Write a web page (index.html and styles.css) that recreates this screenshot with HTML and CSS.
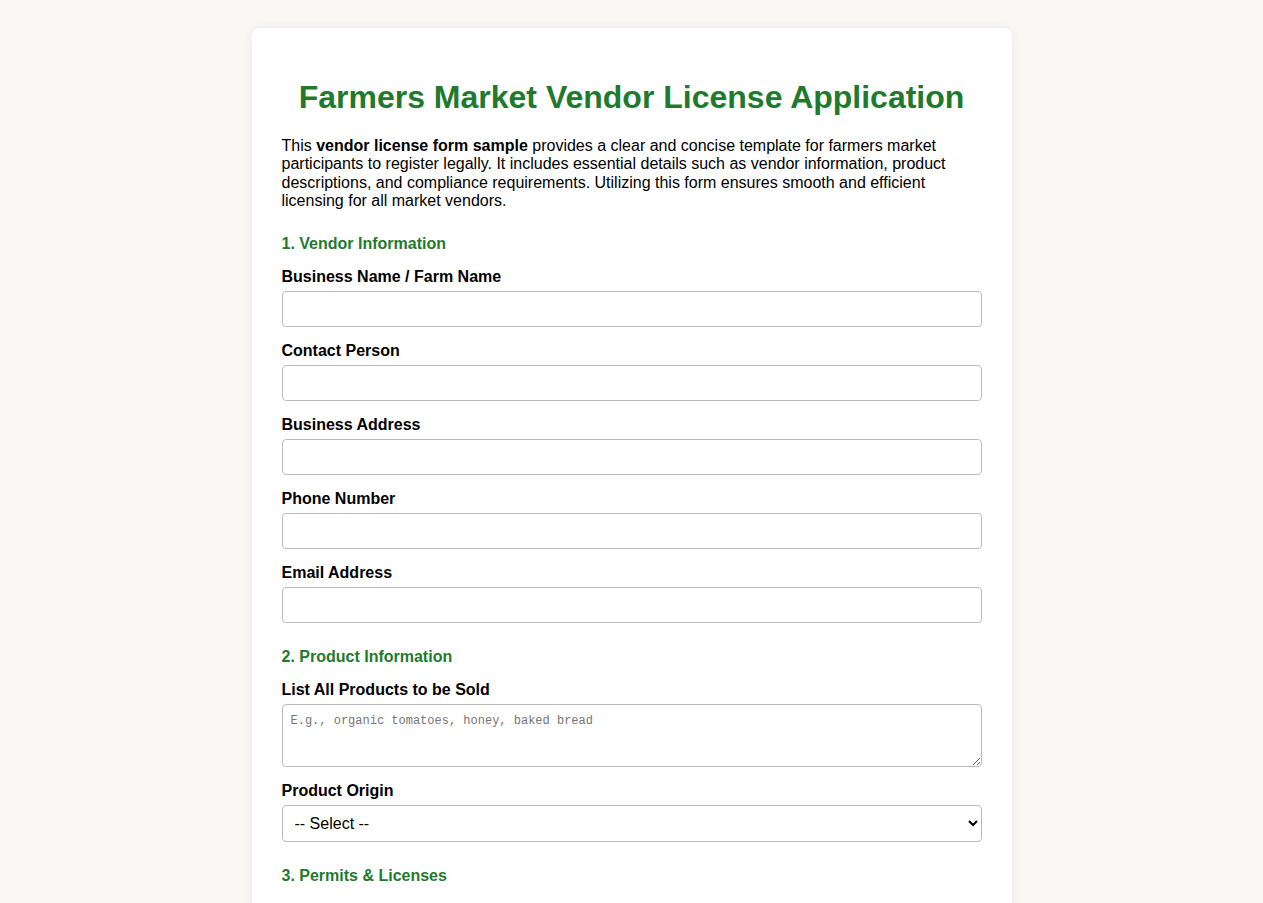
FILE: index.html
```html
<!DOCTYPE html>
<html lang="en">
<head>
  <meta charset="UTF-8">
  <meta name="viewport" content="width=device-width, initial-scale=1.0">
  <title>Farmers Market Vendor License Application</title>
  <link rel="stylesheet" href="styles.css">
</head>
<body>
  <div class="container">
    <h1>Farmers Market Vendor License Application</h1>
    <p class="intro">This <strong>vendor license form sample</strong> provides a clear and concise template for farmers market participants to register legally. It includes essential details such as vendor information, product descriptions, and compliance requirements. Utilizing this form ensures smooth and efficient licensing for all market vendors.</p>

    <form>
      <h2>1. Vendor Information</h2>
      <div class="form-group">
        <label for="business">Business Name / Farm Name</label>
        <input type="text" id="business">
      </div>
      <div class="form-group">
        <label for="contact">Contact Person</label>
        <input type="text" id="contact">
      </div>
      <div class="form-group">
        <label for="address">Business Address</label>
        <input type="text" id="address">
      </div>
      <div class="form-group">
        <label for="phone">Phone Number</label>
        <input type="tel" id="phone">
      </div>
      <div class="form-group">
        <label for="email">Email Address</label>
        <input type="email" id="email">
      </div>

      <h2>2. Product Information</h2>
      <div class="form-group">
        <label for="products">List All Products to be Sold</label>
        <textarea id="products" rows="3" placeholder="E.g., organic tomatoes, honey, baked bread"></textarea>
      </div>
      <div class="form-group">
        <label for="origin">Product Origin</label>
        <select id="origin">
          <option value="">-- Select --</option>
          <option value="own">Grown / Made by Vendor</option>
          <option value="local">Sourced Locally</option>
          <option value="other">Other</option>
        </select>
      </div>

      <h2>3. Permits &amp; Licenses</h2>
    </form>
  </div>
</body>
</html>
```

FILE: styles.css
```css
body { font-family: Arial, "Liberation Sans", sans-serif; background-color: #f9f8f4; margin: 0; padding: 28px 20px; color: #000; }
.container { max-width: 700px; margin: 0 auto; background: #fff; padding: 30px 30px 40px; border-radius: 8px; box-shadow: 0 0 12px rgba(0, 0, 0, 0.06); }
h1 { text-align: center; color: #1f7a2e; font-size: 32px; margin: 21px 0; line-height: 37px; }
.intro { margin: 0 0 16px; line-height: 18.4px; }
h2 { color: #1f7a2e; font-size: 16px; line-height: 18px; margin: 25px 0 15px; }
form h2:first-child { margin-top: 24px; }
.form-group { margin-bottom: 15px; }
label { font-weight: bold; display: block; line-height: 18px; margin-bottom: 5px; }
input, select, textarea { width: 100%; box-sizing: border-box; padding: 8px; border: 1px solid #bbb; border-radius: 4px; background: #fff; }
input, select { font-family: Arial, "Liberation Sans", sans-serif; font-size: 16px; height: 36px; }
select { height: 37px; }
textarea { font-family: "Liberation Mono", monospace; font-size: 12px; line-height: 15.2px; padding-top: 9px; padding-bottom: 7px; display: block; }
textarea::placeholder { color: #767676; }
```
